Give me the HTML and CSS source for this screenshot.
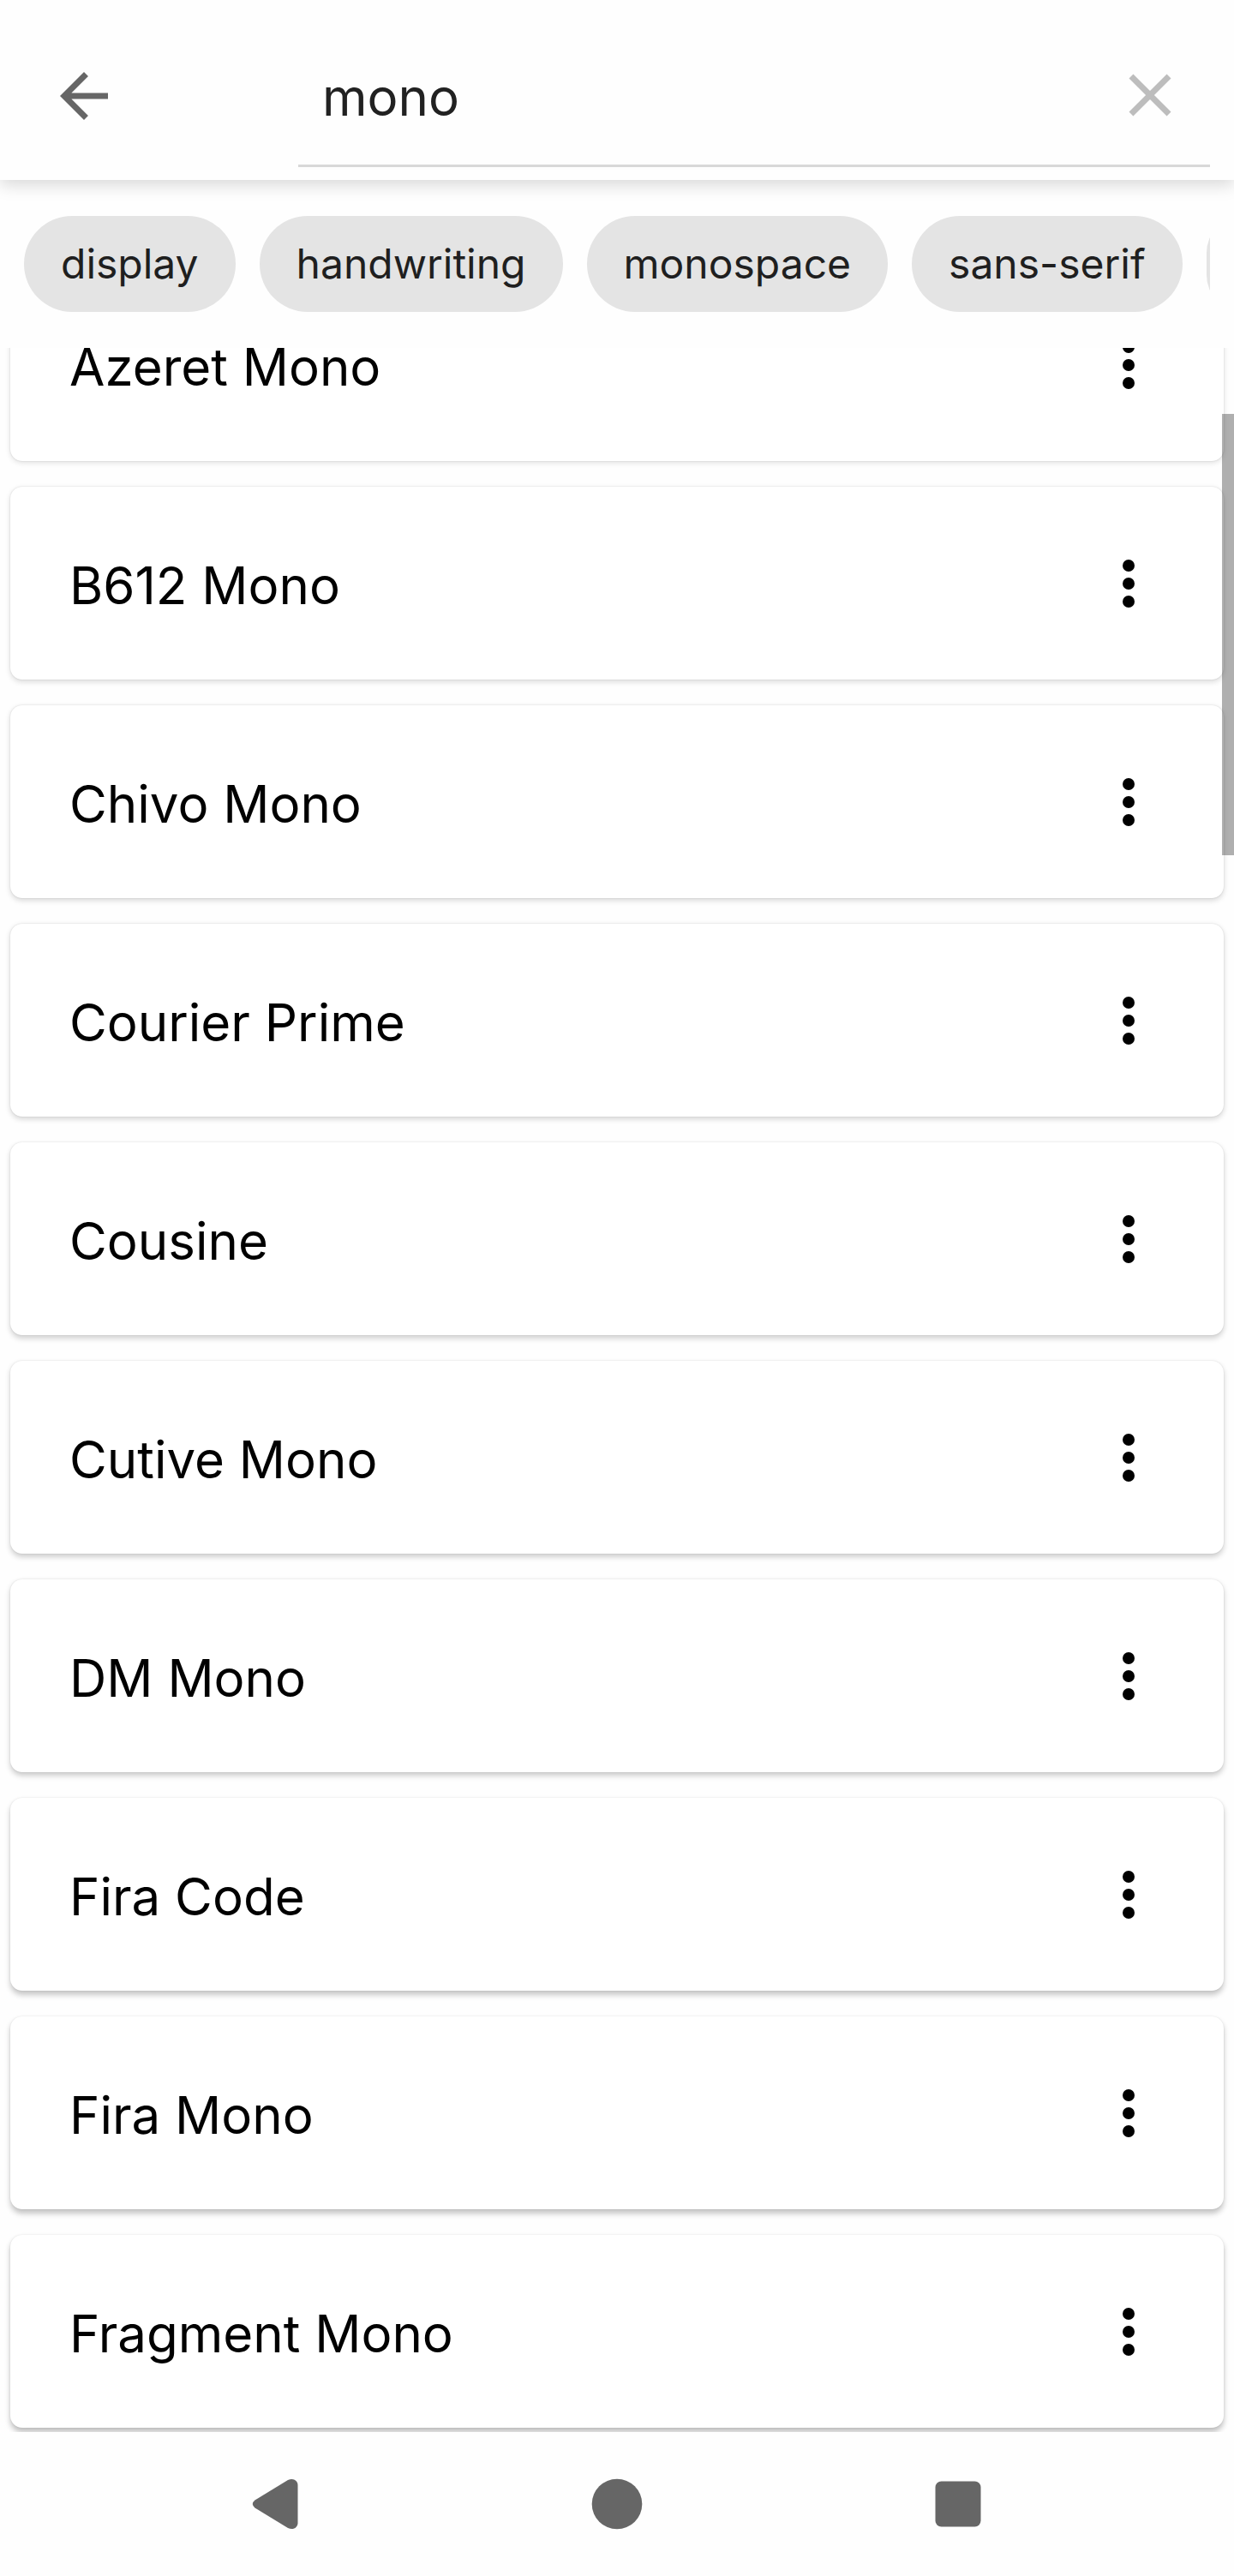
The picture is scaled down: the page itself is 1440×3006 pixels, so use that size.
FILE: index.html
```html
<!DOCTYPE html>
<html lang="en">
<head>
<meta charset="utf-8">
<meta name="viewport" content="width=device-width, initial-scale=1">
<title>Font search</title>
<link rel="stylesheet" href="styles.css">
</head>
<body>
<svg class="sprite" aria-hidden="true">
  <symbol id="more" viewBox="0 0 24 24"><circle cx="12" cy="6" r="2"/><circle cx="12" cy="12" r="2"/><circle cx="12" cy="18" r="2"/></symbol>
</svg>
<header class="toolbar">
  <button class="icon-button" aria-label="Back"><svg class="icon" viewBox="0 0 24 24"><path d="M20 11H7.83l5.59-5.59L12 4l-8 8 8 8 1.41-1.41L7.83 13H20z"/></svg></button>
  <div class="search">
    <input class="search-input" type="text" value="mono" aria-label="Search fonts">
    <button class="icon-button clear" aria-label="Clear"><svg class="icon" viewBox="0 0 24 24"><path d="M19 6.41 17.59 5 12 10.59 6.41 5 5 6.41 10.59 12 5 17.59 6.41 19 12 13.41 17.59 19 19 17.59 13.41 12z"/></svg></button>
  </div>
</header>
<div class="filters">
  <div class="chips">
    <button class="chip">display</button>
    <button class="chip">handwriting</button>
    <button class="chip">monospace</button>
    <button class="chip">sans-serif</button>
    <button class="chip" aria-label="serif"></button>
  </div>
</div>
<main class="results">
  <ul class="cards">
    <li class="card" style="--i:0"><span class="name">Azeret Mono</span><button class="icon-button" aria-label="More options"><svg class="icon"><use href="#more"/></svg></button></li>
    <li class="card" style="--i:1"><span class="name">B612 Mono</span><button class="icon-button" aria-label="More options"><svg class="icon"><use href="#more"/></svg></button></li>
    <li class="card" style="--i:2"><span class="name">Chivo Mono</span><button class="icon-button" aria-label="More options"><svg class="icon"><use href="#more"/></svg></button></li>
    <li class="card" style="--i:3"><span class="name">Courier Prime</span><button class="icon-button" aria-label="More options"><svg class="icon"><use href="#more"/></svg></button></li>
    <li class="card" style="--i:4"><span class="name">Cousine</span><button class="icon-button" aria-label="More options"><svg class="icon"><use href="#more"/></svg></button></li>
    <li class="card" style="--i:5"><span class="name">Cutive Mono</span><button class="icon-button" aria-label="More options"><svg class="icon"><use href="#more"/></svg></button></li>
    <li class="card" style="--i:6"><span class="name">DM Mono</span><button class="icon-button" aria-label="More options"><svg class="icon"><use href="#more"/></svg></button></li>
    <li class="card" style="--i:7"><span class="name">Fira Code</span><button class="icon-button" aria-label="More options"><svg class="icon"><use href="#more"/></svg></button></li>
    <li class="card" style="--i:8"><span class="name">Fira Mono</span><button class="icon-button" aria-label="More options"><svg class="icon"><use href="#more"/></svg></button></li>
    <li class="card" style="--i:9"><span class="name">Fragment Mono</span><button class="icon-button" aria-label="More options"><svg class="icon"><use href="#more"/></svg></button></li>
  </ul>
  <div class="scrollbar"></div>
</main>
<nav class="system-nav" aria-label="System">
  <button class="nav-button" aria-label="Back"><svg class="nav-icon" viewBox="0 0 60 60"><path d="M5.500 25.500 44 2C50 -1 55.500 2.500 55.500 8V52C55.500 57.500 50 61 44 58L5.500 34.500Q0 30 5.500 25.500z"/></svg></button>
  <button class="nav-button" aria-label="Home"><svg class="nav-icon" viewBox="0 0 60 60"><circle cx="30" cy="30" r="29.300"/></svg></button>
  <button class="nav-button" aria-label="Recent apps"><svg class="nav-icon" viewBox="0 0 60 60"><rect x="3.500" y="3.500" width="53" height="53" rx="7"/></svg></button>
</nav>
</body>
</html>
```
FILE: styles.css
```css
* {
  box-sizing: border-box;
}

body {
  display: flex;
  flex-direction: column;
  height: 100vh;
  margin: 0;
  overflow: hidden;
  background: #fefefe;
  color: #000;
  font-family: Inter, Roboto, sans-serif;
}

button {
  padding: 0;
  border: 0;
  background: none;
  color: inherit;
  font: inherit;
}

.sprite {
  position: absolute;
  width: 0;
  height: 0;
}

.icon-button {
  display: flex;
  flex: none;
}

.icon {
  width: 84px;
  height: 84px;
  fill: currentColor;
}

.toolbar {
  display: flex;
  flex: none;
  align-items: center;
  gap: 208px;
  padding: 29px 28px 15px 56px;
  background: #fefefe;
  box-shadow: 0 6px 18px rgba(0, 0, 0, 0.15);
  color: #666;
  z-index: 1;
}

.search {
  display: flex;
  flex: 1;
  align-items: center;
  min-width: 0;
  height: 166px;
  padding: 0 28px;
  border-bottom: 3px solid #d8d8d8;
}

.search-input {
  flex: 1;
  min-width: 0;
  padding: 4px 0 0;
  border: 0;
  outline: 0;
  background: none;
  color: #212121;
  font: inherit;
  font-size: 60px;
  line-height: 84px;
}

.clear {
  color: #bdbdbd;
}

.filters {
  flex: none;
  padding: 42px 28px;
}

.chips {
  display: flex;
  gap: 28px;
  overflow: hidden;
}

.chip {
  flex: none;
  height: 112px;
  padding: 0 43px;
  border-radius: 56px;
  background: #e4e4e4;
  color: #1f1f1f;
  font-size: 48px;
  line-height: 112px;
}

.results {
  position: relative;
  display: flex;
  flex: 1;
  flex-direction: column;
  justify-content: flex-end;
  min-height: 0;
  overflow: hidden;
}

.cards {
  display: flex;
  flex-direction: column;
  gap: 30px;
  margin: 0;
  padding: 0 12px 5px;
  list-style: none;
}

/* Shadows deepen the further a card sits from the light at the top. */
.card {
  display: flex;
  align-items: center;
  justify-content: space-between;
  height: 225px;
  padding: 0 69px;
  border-radius: 14px;
  background: #fff;
  box-shadow:
    0 0 2px rgba(0, 0, 0, calc(0.14 - var(--i) * 0.006)),
    0 calc(2px + var(--i) * 0.3px) 6px rgba(0, 0, 0, calc(0.12 + var(--i) * 0.014));
}

.name {
  padding-top: 4px;
  font-size: 60px;
  line-height: 84px;
}

.scrollbar {
  position: absolute;
  top: 77px;
  right: 0;
  width: 14px;
  height: 515px;
  background: rgba(0, 0, 0, 0.31);
}

.system-nav {
  display: flex;
  flex: none;
  justify-content: center;
  height: 168px;
}

.nav-button {
  display: flex;
  align-items: center;
  justify-content: center;
  width: 398px;
}

.nav-icon {
  width: 60px;
  height: 60px;
  fill: #666;
}
```
